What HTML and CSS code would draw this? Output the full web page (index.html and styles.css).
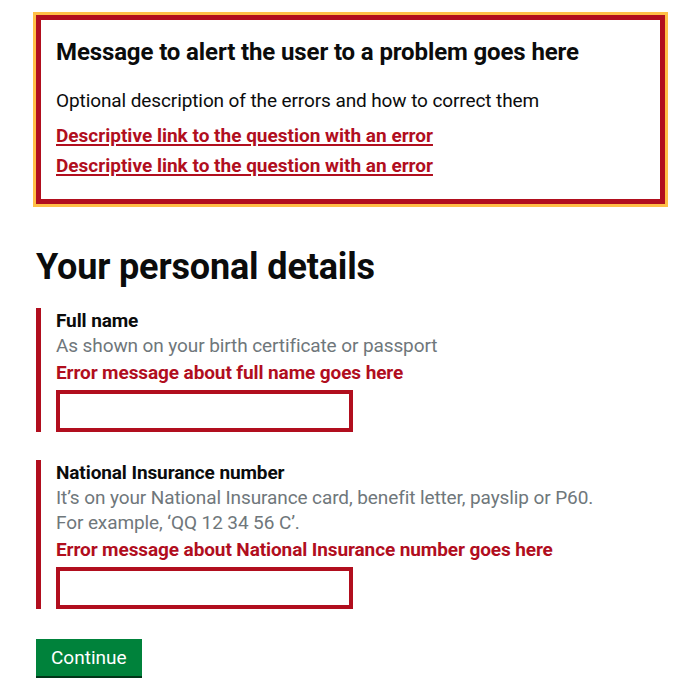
FILE: index.html
```html
<!DOCTYPE html>
<html lang="en">
<head>
<meta charset="utf-8">
<title>Your personal details</title>
<link rel="stylesheet" href="styles.css">
</head>
<body>
<main class="page">
  <div class="error-summary" role="alert" tabindex="-1">
    <h2 class="error-summary__title">Message to alert the user to a problem goes here</h2>
    <p class="error-summary__body">Optional description of the errors and how to correct them</p>
    <ul class="error-summary__list">
      <li><a href="#full-name">Descriptive link to the question with an error</a></li>
      <li><a href="#ni-number">Descriptive link to the question with an error</a></li>
    </ul>
  </div>

  <h1 class="heading-l">Your personal details</h1>

  <div class="form-group form-group--error">
    <label class="label" for="full-name">Full name</label>
    <div class="hint">As shown on your birth certificate or passport</div>
    <span class="error-message">Error message about full name goes here</span>
    <input class="input input--error" id="full-name" type="text">
  </div>

  <div class="form-group form-group--error">
    <label class="label" for="ni-number">National Insurance number</label>
    <div class="hint">It’s on your National Insurance card, benefit letter, payslip or P60.<br>For example, ‘QQ 12 34 56 C’.</div>
    <span class="error-message">Error message about National Insurance number goes here</span>
    <input class="input input--error" id="ni-number" type="text">
  </div>

  <button class="button" type="submit">Continue</button>
</main>
</body>
</html>
```

FILE: styles.css
```css
html, body {
  margin: 0;
  padding: 0;
  background: #ffffff;
}

body {
  font-family: Roboto, "Liberation Sans", Arial, sans-serif;
  color: #0b0c0c;
  letter-spacing: -0.1px;
}

.page {
  padding: 15px 26px 20px 36px;
}

.error-summary {
  border: 5px solid #b10e1e;
  outline: 3px solid #ffbf47;
  padding: 17px 15px 16px;
}

.error-summary__title {
  margin: 0 0 21px;
  font-size: 24px;
  line-height: 30px;
  font-weight: 700;
  letter-spacing: -0.12px;
}

.error-summary__body {
  margin: 0 0 10px;
  font-size: 19px;
  line-height: 25px;
}

.error-summary__list {
  margin: 0;
  padding: 0;
  list-style: none;
}

.error-summary__list li {
  margin: 0 0 5px;
  font-size: 19px;
  line-height: 25px;
  font-weight: 700;
  letter-spacing: 0;
}

.error-summary__list a {
  color: #b10e1e;
  text-decoration: underline;
  text-decoration-thickness: 2px;
  text-underline-offset: 2px;
}

.heading-l {
  margin: 43px 0 23px;
  font-size: 36px;
  line-height: 40px;
  font-weight: 700;
  letter-spacing: -0.15px;
}

.form-group {
  margin: 0 0 30px;
}

.form-group--error {
  border-left: 5px solid #b10e1e;
  padding-left: 15px;
}

.label {
  display: block;
  margin-top: -2px;
  font-size: 19px;
  line-height: 25px;
  font-weight: 700;
}

.hint {
  margin: 0 0 2px;
  font-size: 19px;
  line-height: 25px;
  color: #6f777b;
}

.error-message {
  display: block;
  margin: 0 0 5px;
  font-size: 19px;
  line-height: 25px;
  font-weight: 700;
  color: #b10e1e;
}

.input {
  display: block;
  box-sizing: border-box;
  width: 297px;
  height: 42px;
  margin: 0;
  padding: 5px;
  border: 2px solid #0b0c0c;
  border-radius: 0;
  font-family: inherit;
  font-size: 19px;
  background: #ffffff;
}

.input--error {
  border: 4px solid #b10e1e;
}

.button {
  display: inline-block;
  margin: 0;
  padding: 8px 15px 7px;
  border: 0;
  border-radius: 0;
  background: #00823b;
  color: #ffffff;
  box-shadow: 0 2px 0 #003618;
  font-family: inherit;
  font-size: 19px;
  line-height: 22px;
  letter-spacing: 0;
  cursor: pointer;
}
```
